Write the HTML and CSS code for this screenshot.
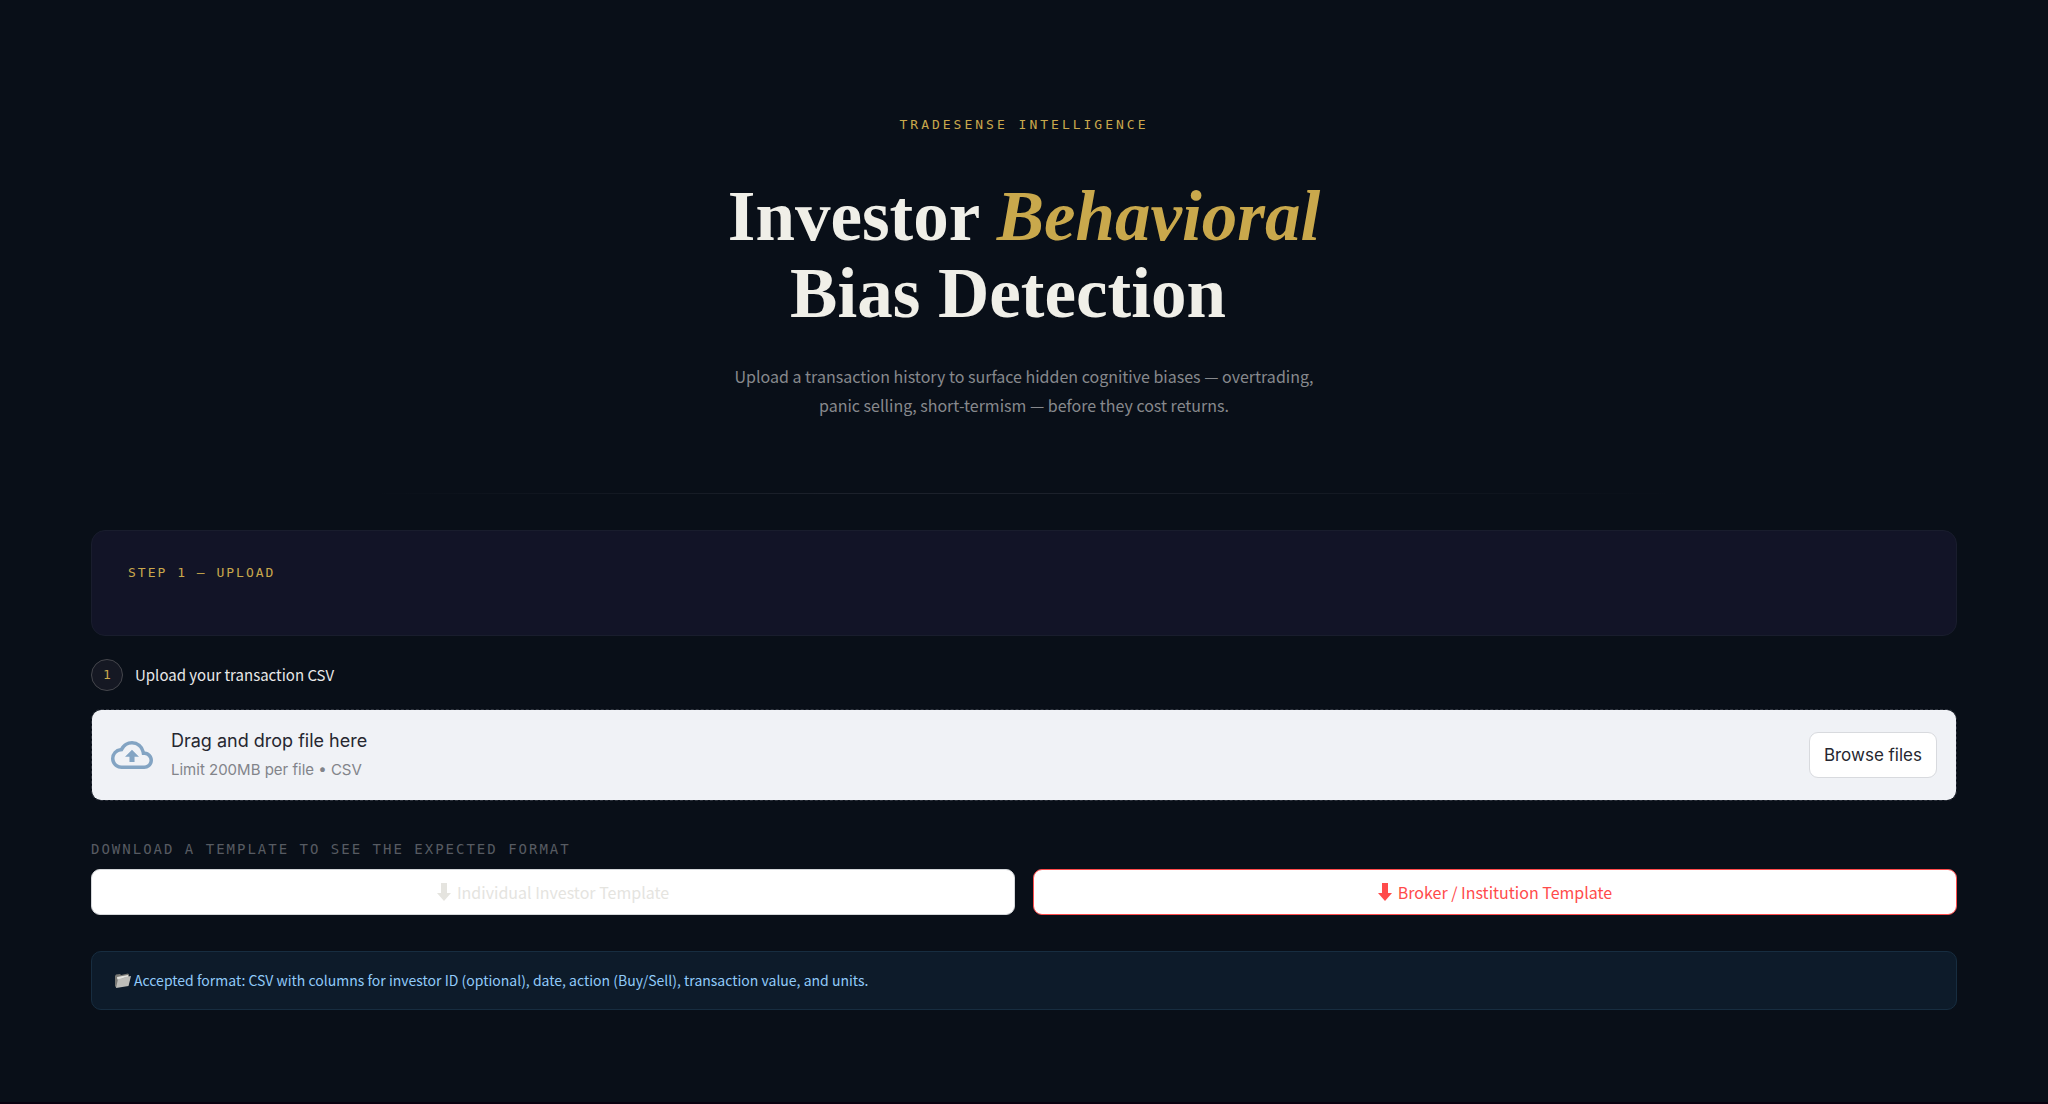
FILE: index.html
```
<!DOCTYPE html>
<html lang="en">
<head>
    <meta charset="UTF-8">
    <meta name="viewport" content="width=device-width, initial-scale=1.0">
    <title>TradeSense Intelligence</title>
    <link rel="stylesheet" href="styles.css">
</head>
<body>

    <main class="container">
        <header class="hero">
            <p class="eyebrow">TRADESENSE INTELLIGENCE</p>
            <h1>Investor <em>Behavioral</em><br><span class="title-end">Bias Detection</span></h1>
            <p class="subtitle">Upload a transaction history to surface hidden cognitive biases — overtrading, panic selling, short-termism — before they cost returns.</p>
        </header>

        <hr class="divider">

        <section class="card">
            <h2 class="card-title">STEP 1 — UPLOAD</h2>
        </section>

        <div class="step">
            <span class="step-number">1</span>
            <span class="step-text">Upload your transaction CSV</span>
        </div>

        <section class="dropzone">
            <svg class="cloud" viewBox="0 0 24 24" fill="#83a4c3" aria-hidden="true">
                <path d="M19.35 10.04A7.49 7.49 0 0 0 12 4C9.11 4 6.6 5.64 5.35 8.04A5.994 5.994 0 0 0 0 14c0 3.31 2.69 6 6 6h13c2.76 0 5-2.24 5-5 0-2.64-2.05-4.78-4.65-4.96zM19 18H6c-2.21 0-4-1.79-4-4 0-2.05 1.53-3.76 3.56-3.97l1.07-.11.5-.95A5.469 5.469 0 0 1 12 6c2.62 0 4.88 1.86 5.39 4.43l.3 1.5 1.53.11A2.98 2.98 0 0 1 22 15c0 1.65-1.35 3-3 3zM8 13h2.55v3h2.9v-3H16l-4-4z"/>
            </svg>
            <div class="drop-text">
                <p class="drop-main">Drag and drop file here</p>
                <p class="drop-limit">Limit 200MB per file • CSV</p>
            </div>
            <button class="browse" type="button">Browse files</button>
        </section>

        <h2 class="templates-title">DOWNLOAD A TEMPLATE TO SEE THE EXPECTED FORMAT</h2>
        <div class="templates">
            <button class="template" type="button">
                <svg class="arrow" viewBox="0 0 14 18" aria-hidden="true"><path d="M4 0h6v10h4l-7 8-7-8h4z"/></svg>
                Individual Investor Template
            </button>
            <button class="template template-active" type="button">
                <svg class="arrow" viewBox="0 0 14 18" aria-hidden="true"><path d="M4 0h6v10h4l-7 8-7-8h4z"/></svg>
                Broker / Institution Template
            </button>
        </div>

        <p class="info">
            <svg class="folder" viewBox="0 0 17 15" aria-hidden="true">
                <path d="M1 3l1-1.500 4-.5 1 1 7-1.500 1 1v3L2 14.500 1 13z" fill="#777773"/>
                <path d="M3 4l11-2 .3 2.500-11 2z" fill="#e4e4e0"/>
                <path d="M4 6l5-.5.8-1.300L17 3l-2.500 10L2 15z" fill="#bdbdb9"/>
            </svg>
            Accepted format: CSV with columns for investor ID (optional), date, action (Buy/Sell), transaction value, and units.
        </p>
    </main>

</body>
</html>
```

FILE: styles.css
```
* {
    box-sizing: border-box;
}

body {
    margin: 0;
    min-height: 100vh;
    background-color: #090f18;
    border-bottom: 2px solid #08000f;
    color: #e8e8e8;
    font-family: 'Noto Sans CJK SC', 'Noto Sans', sans-serif;
}

h1, h2, p {
    margin: 0;
}

.container {
    padding: 112px 91px 80px;
}

/* Hero */
.hero {
    text-align: center;
}

.eyebrow {
    color: #c9a84c;
    font-family: 'DejaVu Sans Mono', monospace;
    font-size: 13px;
    line-height: 26px;
    letter-spacing: 3px;
}

h1 {
    margin-top: 40px;
    color: #f0efe8;
    font-family: 'Liberation Serif', serif;
    font-size: 71px;
    font-weight: bold;
    line-height: 77px;
}

h1 em {
    color: #c9a84c;
}

.title-end {
    padding-right: 32px;
}

.subtitle {
    max-width: 610px;
    margin: 30px auto 0;
    color: #87898d;
    font-size: 16px;
    line-height: 29px;
}

.divider {
    height: 1px;
    margin: 73px 280px 36px;
    border: none;
    background: linear-gradient(90deg, transparent, #1c212b 35%, #1c212b 55%, transparent);
}

/* Upload step */
.card {
    height: 106px;
    padding: 32px 36px;
    background-color: #121427;
    border: 1px solid #191d2d;
    border-radius: 14px;
}

.card-title {
    color: #c9a84c;
    font-family: 'DejaVu Sans Mono', monospace;
    font-size: 13px;
    font-weight: normal;
    line-height: 20px;
    letter-spacing: 2px;
}

.step {
    display: flex;
    align-items: center;
    gap: 12px;
    margin: 23px 0 18px;
}

.step-number {
    width: 32px;
    height: 32px;
    border: 1px solid #45464c;
    border-radius: 50%;
    background-color: #151823;
    color: #c9a84c;
    font-family: 'DejaVu Sans Mono', monospace;
    font-size: 13px;
    line-height: 30px;
    text-align: center;
}

.step-text {
    font-size: 15px;
    line-height: 24px;
}

.dropzone {
    display: flex;
    align-items: center;
    gap: 18px;
    padding: 16px 19px;
    min-height: 92px;
    background-color: #f0f2f6;
    background-clip: padding-box;
    border: 1px dashed #30353f;
    border-radius: 10px;
    color: #262730;
    font-family: 'Inter', sans-serif;
}

.cloud {
    width: 42px;
    height: 42px;
}

.drop-text {
    flex: 1;
}

.drop-main {
    font-size: 18px;
    line-height: 30px;
}

.drop-limit {
    color: #82848a;
    font-size: 15px;
    line-height: 28px;
}

.browse {
    height: 46px;
    padding: 0 14px;
    background-color: #fff;
    border: 1px solid #d8dade;
    border-radius: 9px;
    color: #262730;
    font-family: 'Inter', sans-serif;
    font-size: 17px;
}

/* Templates */
.templates-title {
    margin: 36px 0 8px;
    color: #575b62;
    font-family: 'DejaVu Sans Mono', monospace;
    font-size: 14px;
    font-weight: normal;
    line-height: 24px;
    letter-spacing: 2px;
}

.templates {
    display: grid;
    grid-template-columns: 1fr 1fr;
    gap: 18px;
}

.template {
    display: flex;
    align-items: center;
    justify-content: center;
    gap: 6px;
    height: 46px;
    background-color: #fff;
    border: 1px solid #d5d7da;
    border-radius: 9px;
    color: #e5e4df;
    font-family: 'Noto Sans CJK SC', 'Noto Sans', sans-serif;
    font-size: 16px;
}

.template-active {
    border-color: #ff4b4b;
    color: #ff4b4b;
}

.arrow {
    width: 14px;
    height: 18px;
    fill: currentColor;
}

.info {
    display: flex;
    align-items: center;
    gap: 3px;
    margin-top: 36px;
    padding: 16px 22px;
    background-color: #0d1b2a;
    border: 1px solid #172d40;
    border-radius: 10px;
    color: #90caf9;
    font-size: 14px;
    line-height: 25px;
}

.folder {
    width: 17px;
    height: 15px;
}
```
